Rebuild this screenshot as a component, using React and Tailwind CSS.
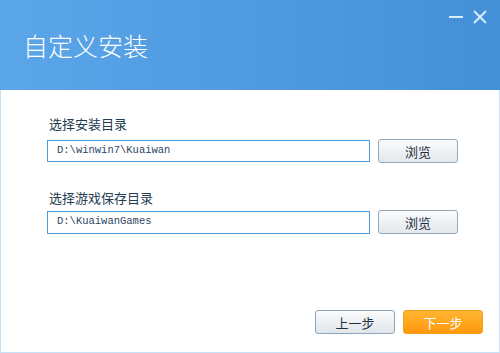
export default function App() {
  const cjk = { fontFamily: '"Noto Sans CJK SC", "Noto Sans", sans-serif' };
  const mono = { fontFamily: '"Liberation Mono", "DejaVu Sans Mono", monospace' };
  return (
    <div className="w-[500px] h-[353px] flex flex-col bg-white overflow-hidden" style={cjk}>
      <div className="h-[90px] shrink-0 flex flex-col bg-gradient-to-r from-[#5ba5e9] to-[#4490d8]">
        <div className="flex justify-end items-center gap-[7px] pt-[9px] pr-[13px] h-[25px]">
          <svg width="17" height="14" viewBox="0 0 17 14">
            <rect x="0" y="6" width="14" height="2" fill="#d9ecfb" />
          </svg>
          <svg width="14" height="14" viewBox="0 0 14 14">
            <path d="M1 1 L13 13 M13 1 L1 13" stroke="#d9ecfb" strokeWidth="2" />
          </svg>
        </div>
        <div className="pl-[23px] pt-[8px] text-white text-[25px] font-light leading-none">
          自定义安装
        </div>
      </div>
      <div className="flex-1 flex flex-col border-x border-b border-[#c6e0f6] pl-[46px] pr-[16px] pt-[27px]">
        <div className="text-[13px] leading-none text-[#233b50] pl-[2px] h-[15px]">选择安装目录</div>
        <div className="flex items-center gap-[8px] mt-[7px]">
          <div className="w-[323px] h-[22px] border border-[#4c9ad8] flex items-center pl-[9px] text-[10.5px] text-[#2b4763]" style={mono}>
            D:\winwin7\Kuaiwan
          </div>
          <button className="w-[80px] h-[24px] rounded-[3px] border border-[#97a7b8] bg-gradient-to-b from-[#fafbfc] to-[#e3e8ec] text-[13px] leading-none text-[#1f2f3f] flex items-center justify-center">
            浏览
          </button>
        </div>
        <div className="text-[13px] leading-none text-[#233b50] pl-[2px] h-[15px] mt-[28px]">选择游戏保存目录</div>
        <div className="flex items-center gap-[8px] mt-[4px]">
          <div className="w-[323px] h-[23px] border border-[#4c9ad8] flex items-center pl-[9px] text-[10.5px] text-[#2b4763]" style={mono}>
            D:\KuaiwanGames
          </div>
          <button className="w-[80px] h-[24px] rounded-[3px] border border-[#97a7b8] bg-gradient-to-b from-[#fafbfc] to-[#e3e8ec] text-[13px] leading-none text-[#1f2f3f] flex items-center justify-center">
            浏览
          </button>
        </div>
        <div className="flex-1" />
        <div className="flex justify-end gap-[8px] mb-[18px]">
          <button className="w-[80px] h-[24px] rounded-[3px] border border-[#8ea4bc] bg-gradient-to-b from-[#fafbfc] to-[#e1e6ea] text-[13px] leading-none text-[#1f2f3f] flex items-center justify-center">
            上一步
          </button>
          <button className="w-[80px] h-[24px] rounded-[3px] border border-[#f4a21c] bg-gradient-to-b from-[#ffb52f] to-[#ff9808] text-[13px] leading-none text-white flex items-center justify-center">
            下一步
          </button>
        </div>
      </div>
    </div>
  );
}
